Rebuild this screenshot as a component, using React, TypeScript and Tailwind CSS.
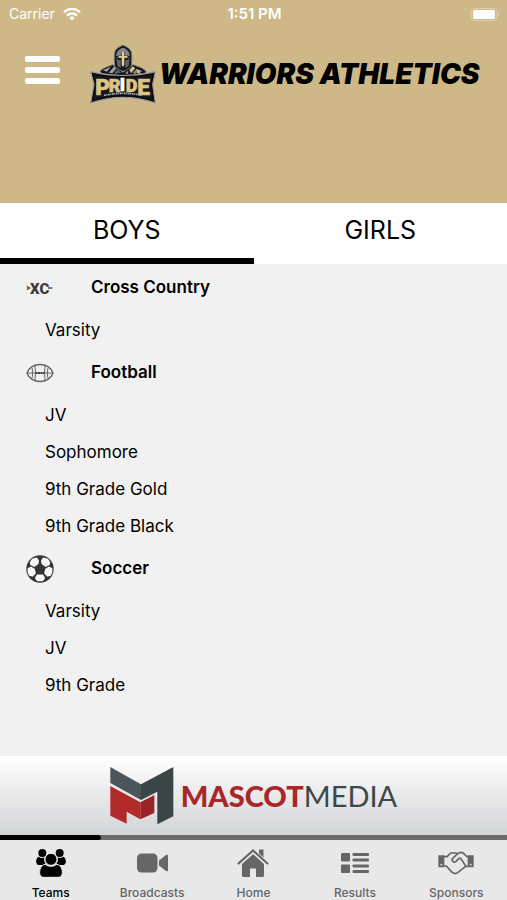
import { useState } from "react";
import { clsx } from "clsx";

const genders = ["BOYS", "GIRLS"] as const;

const sports = [
  { name: "Cross Country", Icon: CrossCountryIcon, teams: ["Varsity"] },
  {
    name: "Football",
    Icon: FootballIcon,
    teams: ["JV", "Sophomore", "9th Grade Gold", "9th Grade Black"],
  },
  { name: "Soccer", Icon: SoccerIcon, teams: ["Varsity", "JV", "9th Grade"] },
];

const navItems = [
  { label: "Teams", Icon: TeamsIcon },
  { label: "Broadcasts", Icon: BroadcastsIcon },
  { label: "Home", Icon: HomeIcon },
  { label: "Results", Icon: ResultsIcon },
  { label: "Sponsors", Icon: SponsorsIcon },
];

function WifiIcon() {
  return (
    <svg viewBox="0 0 18 14" className="h-[14px] w-[18px]" fill="none" stroke="currentColor" strokeWidth="2.4">
      <path d="M1 5.2a11.4 11.4 0 0 1 16 0" />
      <path d="M4 8.6a7.1 7.1 0 0 1 10 0" />
      <path d="M9 13.6 6.2 10.8a4 4 0 0 1 5.6 0z" fill="currentColor" stroke="none" />
    </svg>
  );
}

function BatteryIcon() {
  return (
    <svg viewBox="0 0 30 13" className="h-[13px] w-[30px]">
      <rect x="1" y="0.5" width="26" height="12" rx="3.5" fill="none" stroke="#fff" strokeOpacity="0.35" />
      <rect x="3" y="2" width="22" height="9" rx="1.5" fill="#fff" />
      <path d="M28 4.5c1.6.6 1.6 3.4 0 4z" fill="#fff" fillOpacity="0.4" />
    </svg>
  );
}

function PrideLogo() {
  return (
    <svg viewBox="28 24 198 180" className="h-[60px] w-[66px] shrink-0" role="img" aria-label="Pride">
      {/* helmet */}
      <path d="M127 27c4 4 20 6 25 22 2 12 1 32 0 42l-8 14h-34l-8-14c-1-12-2-30 0-42 5-16 21-18 25-22z" fill="#17181c" stroke="#77777b" strokeWidth="3" />
      <path d="M127 35c13 4 20 14 21 25l-17-3v-11h-8v11l-17 3c1-11 8-21 21-25z" fill="#85868b" />
      <path d="M107 64l13-3v36l-10-8zM147 64l-13-3v36l10-8z" fill="#64656a" />
      <path d="M109 65l11 2v6l-10-3zM145 65l-11 2v6l10-3z" fill="#0b0b0e" />
      <path d="M124 46h6v13h10v6h-9v22l-4 6-4-6V65h-9v-6h10z" fill="#e2ce96" />
      {/* cape */}
      <path d="M58 106c8-10 22-13 38-20l11 9 20 14 20-14 10-9c18 8 32 9 40 22l-12 8-58 10-60-10z" fill="#131418" stroke="#77777b" strokeWidth="2.5" />
      <path d="M66 103l25-11-12 15zM84 110l17-19 6 7-12 14z" fill="#9b9ca0" />
      <path d="M110 98l12 12-18 3zM100 113l6-10 2 12z" fill="#5b5c60" />
      <path d="M146 102l10-11 8 6-13 15zM166 98l20 8-10 1 7 8-15-4z" fill="#d5bf86" />
      <path d="M133 112l10-9-1 12zM156 112l9-12 2 14z" fill="#898a8e" />
      {/* banner */}
      <path d="M30 107q97 23 194 0l-8 38 8 56q-97-34-194 0l10-56z" fill="#16171c" stroke="#9a9a9e" strokeWidth="3.5" strokeLinejoin="round" />
      <path d="M36 114q91 20 182 0l-7 31 7 48q-91-28-182 0l9-48z" fill="none" stroke="#08080b" strokeWidth="3" />
      <g fontFamily="Roboto, sans-serif" fontWeight="900" fill="#dcc388" stroke="#dcc388" strokeWidth="2">
        <text fontSize="68" x="44" y="176">P</text>
        <text fontSize="54" x="84" y="167">R</text>
        <text fontSize="53" x="117" y="165" fill="#fff" stroke="#fff">I</text>
        <text fontSize="54" x="135" y="167">D</text>
        <text fontSize="68" x="170" y="176">E</text>
      </g>
      <path d="M70 178q57-12 114 0" fill="none" stroke="#b9b9bc" strokeWidth="5" strokeDasharray="5 2 3 2" />
    </svg>
  );
}

function MascotMark() {
  return (
    <svg viewBox="46 38 190 174" className="h-[58px] w-[64px] shrink-0" aria-hidden="true">
      <path d="M46 38l92 52v47L46 86z" fill="#4b555a" />
      <path d="M138 90l97-52v148l-48 24v-98l-49 25z" fill="#3a4547" />
      <path d="M46 95l90 49v51l-41-23v36l-49-24z" fill="#b22a2a" />
      <path d="M136 144l42-22v54l-42 19z" fill="#9b2426" />
    </svg>
  );
}

function CrossCountryIcon() {
  return (
    <svg viewBox="0 0 28 28" className="size-7" aria-hidden="true">
      <path d="M.5 11.5l4.5 2.500-4.500 2.500.8-2.500z" fill="#555" />
      <path d="M22 13.200h3.500l2 .8-2 .8H22z" fill="#555" />
      <text x="4" y="19.500" fontFamily="Roboto, sans-serif" fontWeight="900" fontSize="15" fill="#3b3b3b">
        XC
      </text>
    </svg>
  );
}

function FootballIcon() {
  return (
    <svg viewBox="0 0 28 28" className="size-7" fill="none" stroke="#666" aria-hidden="true">
      <path d="M1 14C4.500 2.700 23.500 2.700 27 14 23.500 25.300 4.500 25.300 1 14z" strokeWidth="1.4" />
      <path d="M6 8.500q1.500 5.500 0 11M9 7q1 7 0 14M22 8.500q-1.500 5.500 0 11M19 7q-1 7 0 14" />
      <path d="M1 14h26" />
      <path d="M9.500 14h9" stroke="#444" strokeWidth="2.2" strokeDasharray="2 .5" />
    </svg>
  );
}

function SoccerIcon() {
  return (
    <svg viewBox="0 0 28 28" className="size-7" aria-hidden="true">
      <circle cx="14" cy="14" r="13.700" fill="#333" />
      <g fill="#f7f7f7" stroke="#f7f7f7" strokeWidth="2" strokeLinejoin="round">
        <path d="M6.500 4.800l4-1.300 1.500 2.500-.5 2.500-3 2.200-3-1.200-.8-1.700z" />
        <path d="M21.500 4.800l-4-1.300L16 6l.5 2.500 3 2.200 3-1.200.8-1.700z" />
        <path d="M2.500 14l2.500-1.300 3 2 .8 3.300-2.300 2.500-2.500-.5-1.300-2.500z" />
        <path d="M25.500 14L23 12.700l-3 2-.8 3.300 2.300 2.500 2.500-.5 1.300-2.500z" />
        <path d="M11.500 20.500h5l1.500 2.500-1.500 2.200h-5L10 23z" />
      </g>
      <path d="M14 9.300l4.800 3.500-1.800 5.700h-6l-1.800-5.700z" fill="#333" />
    </svg>
  );
}

function TeamsIcon() {
  return (
    <svg viewBox="110 66 90 84" className="h-7 w-[30px]" fill="currentColor" aria-hidden="true">
      <circle cx="129" cy="78" r="12" />
      <circle cx="181" cy="78" r="12" />
      <path d="M118 89c6 5 12 5 17 2-2 10 1 17 6 23h-24c-9-3-9-20 1-25zM192 89c-6 5-12 5-17 2 2 10-1 17-6 23h24c9-3 9-20-1-25z" />
      <g stroke="#e8e8e8" strokeWidth="3">
        <path d="M137 112c11 8 25 8 36 0 9 1 16 12 16 24 0 10-4 15-12 15h-44c-8 0-12-5-12-15 0-12 7-23 16-24z" />
        <circle cx="155" cy="97" r="18" />
      </g>
    </svg>
  );
}

function BroadcastsIcon() {
  return (
    <svg viewBox="0 0 31 20" className="h-5 w-[31px]" fill="currentColor" aria-hidden="true">
      <rect x="0" y="0.500" width="20.500" height="19" rx="4.500" />
      <path d="M22 7.500l7-5.500c1-.7 2-.3 2 .8v14.400c0 1.100-1 1.500-2 .8l-7-5.500z" />
    </svg>
  );
}

function HomeIcon() {
  return (
    <svg viewBox="0 0 32 30" className="h-[30px] w-8" fill="currentColor" aria-hidden="true">
      <path d="M1.500 15.500L16 2.500l14.500 13" fill="none" stroke="currentColor" strokeWidth="2.200" strokeLinecap="round" />
      <path d="M22 1.500h4.500v8L22 5.500z" />
      <path d="M16 6.200L27 16v11.500c0 .9-.6 1.500-1.500 1.500H19v-8.500h-6V29H6.500C5.600 29 5 28.400 5 27.500V16z" />
    </svg>
  );
}

function ResultsIcon() {
  return (
    <svg viewBox="0 0 28 20" className="h-5 w-7" fill="currentColor" aria-hidden="true">
      <rect x="0" y="0" width="9" height="8.500" rx="1" />
      <rect x="0" y="11.500" width="9" height="8.500" rx="1" />
      <rect x="11.500" y="0" width="16.500" height="3" rx="1" />
      <rect x="11.500" y="5.500" width="16.500" height="3" rx="1" />
      <rect x="11.500" y="11.500" width="16.500" height="3" rx="1" />
      <rect x="11.500" y="17" width="16.500" height="3" rx="1" />
    </svg>
  );
}

function SponsorsIcon() {
  return (
    <svg viewBox="554 76 108 70" className="h-6 w-9" fill="none" stroke="currentColor" strokeWidth="5" strokeLinejoin="round" strokeLinecap="round" aria-hidden="true">
      <path d="M555 88h18v36h-18zM643 88h18v36h-18z" fill="currentColor" stroke="none" />
      <circle cx="564" cy="116" r="2.500" fill="#e8e8e8" stroke="none" />
      <circle cx="652" cy="116" r="2.500" fill="#e8e8e8" stroke="none" />
      <path d="M573 92h8l11-11h15l5 3 6-4h10l13 12h4" />
      <path d="M573 120h6l15 17c6 6 13 7 19 3l24-19h6" />
      <path d="M612 84l-14 13c-5 7 3 15 10 9l9-9h5l15 23" />
    </svg>
  );
}

export default function App() {
  const [gender, setGender] = useState<string>("BOYS");

  return (
    <div className="flex min-h-screen flex-col bg-[#f1f1f1] font-['Inter',sans-serif] text-black">
      <header className="bg-[#ceb887] pb-[99px]">
        <div className="grid h-7 grid-cols-3 items-center pr-[7px] pl-[9px] text-sm text-white">
          <span className="flex items-center gap-2">
            Carrier
            <WifiIcon />
          </span>
          <span className="text-center text-[15px] font-semibold">1:51 PM</span>
          <span className="flex justify-end">
            <BatteryIcon />
          </span>
        </div>

        <div className="flex items-center pt-4 pl-[25px]">
          <button type="button" aria-label="Menu" className="flex w-[35px] shrink-0 flex-col gap-[5px] pb-2">
            <span className="h-[6px] rounded-xs bg-white" />
            <span className="h-[6px] rounded-xs bg-white" />
            <span className="h-[6px] rounded-xs bg-white" />
          </button>
          <div className="ml-[30px] flex items-center gap-[3px]">
            <PrideLogo />
            <h1 className="text-[28px] leading-none font-black whitespace-nowrap italic">
              WARRIORS ATHLETICS
            </h1>
          </div>
        </div>
      </header>

      <div className="grid grid-cols-2 bg-white" role="tablist">
        {genders.map((item) => (
          <button
            key={item}
            type="button"
            role="tab"
            aria-selected={item === gender}
            onClick={() => setGender(item)}
            className={clsx(
              "h-[61px] border-b-6 text-[25px]",
              item === gender ? "border-black" : "border-transparent",
            )}
          >
            {item}
          </button>
        ))}
      </div>

      <main className="flex-1">
        {sports.map(({ name, Icon, teams }) => (
          <section key={name}>
            <h2 className="flex h-12 items-center gap-[37px] pl-[26px] text-[17px] font-semibold">
              <Icon />
              {name}
            </h2>
            <ul>
              {teams.map((team) => (
                <li key={team}>
                  <a href="#" className="flex h-[37px] items-center pl-[45px] text-[17px]">
                    {team}
                  </a>
                </li>
              ))}
            </ul>
          </section>
        ))}
      </main>

      <a
        href="#"
        className="flex h-[79px] items-center justify-center gap-[7px] bg-linear-to-b from-white to-[#d3d4d6] font-['Lato',sans-serif] text-[29px] leading-none text-[#3d474b]"
      >
        <MascotMark />
        <span>
          <span className="font-black text-[#ab2629]">MASCOT</span>MEDIA
        </span>
      </a>

      <div className="h-[5px] bg-[#6b6b6b]">
        <div className="h-full w-1/5 rounded-r-full bg-black" />
      </div>

      <nav className="grid h-[60px] grid-cols-5 bg-[#e8e8e8]">
        {navItems.map(({ label, Icon }, i) => (
          <a
            key={label}
            href="#"
            aria-current={i === 0 ? "page" : undefined}
            className={clsx(
              "flex flex-col items-center text-xs font-medium",
              i === 0 ? "text-black" : "text-[#666]",
            )}
          >
            <span className="flex h-[45px] items-center">
              <Icon />
            </span>
            {label}
          </a>
        ))}
      </nav>
    </div>
  );
}
